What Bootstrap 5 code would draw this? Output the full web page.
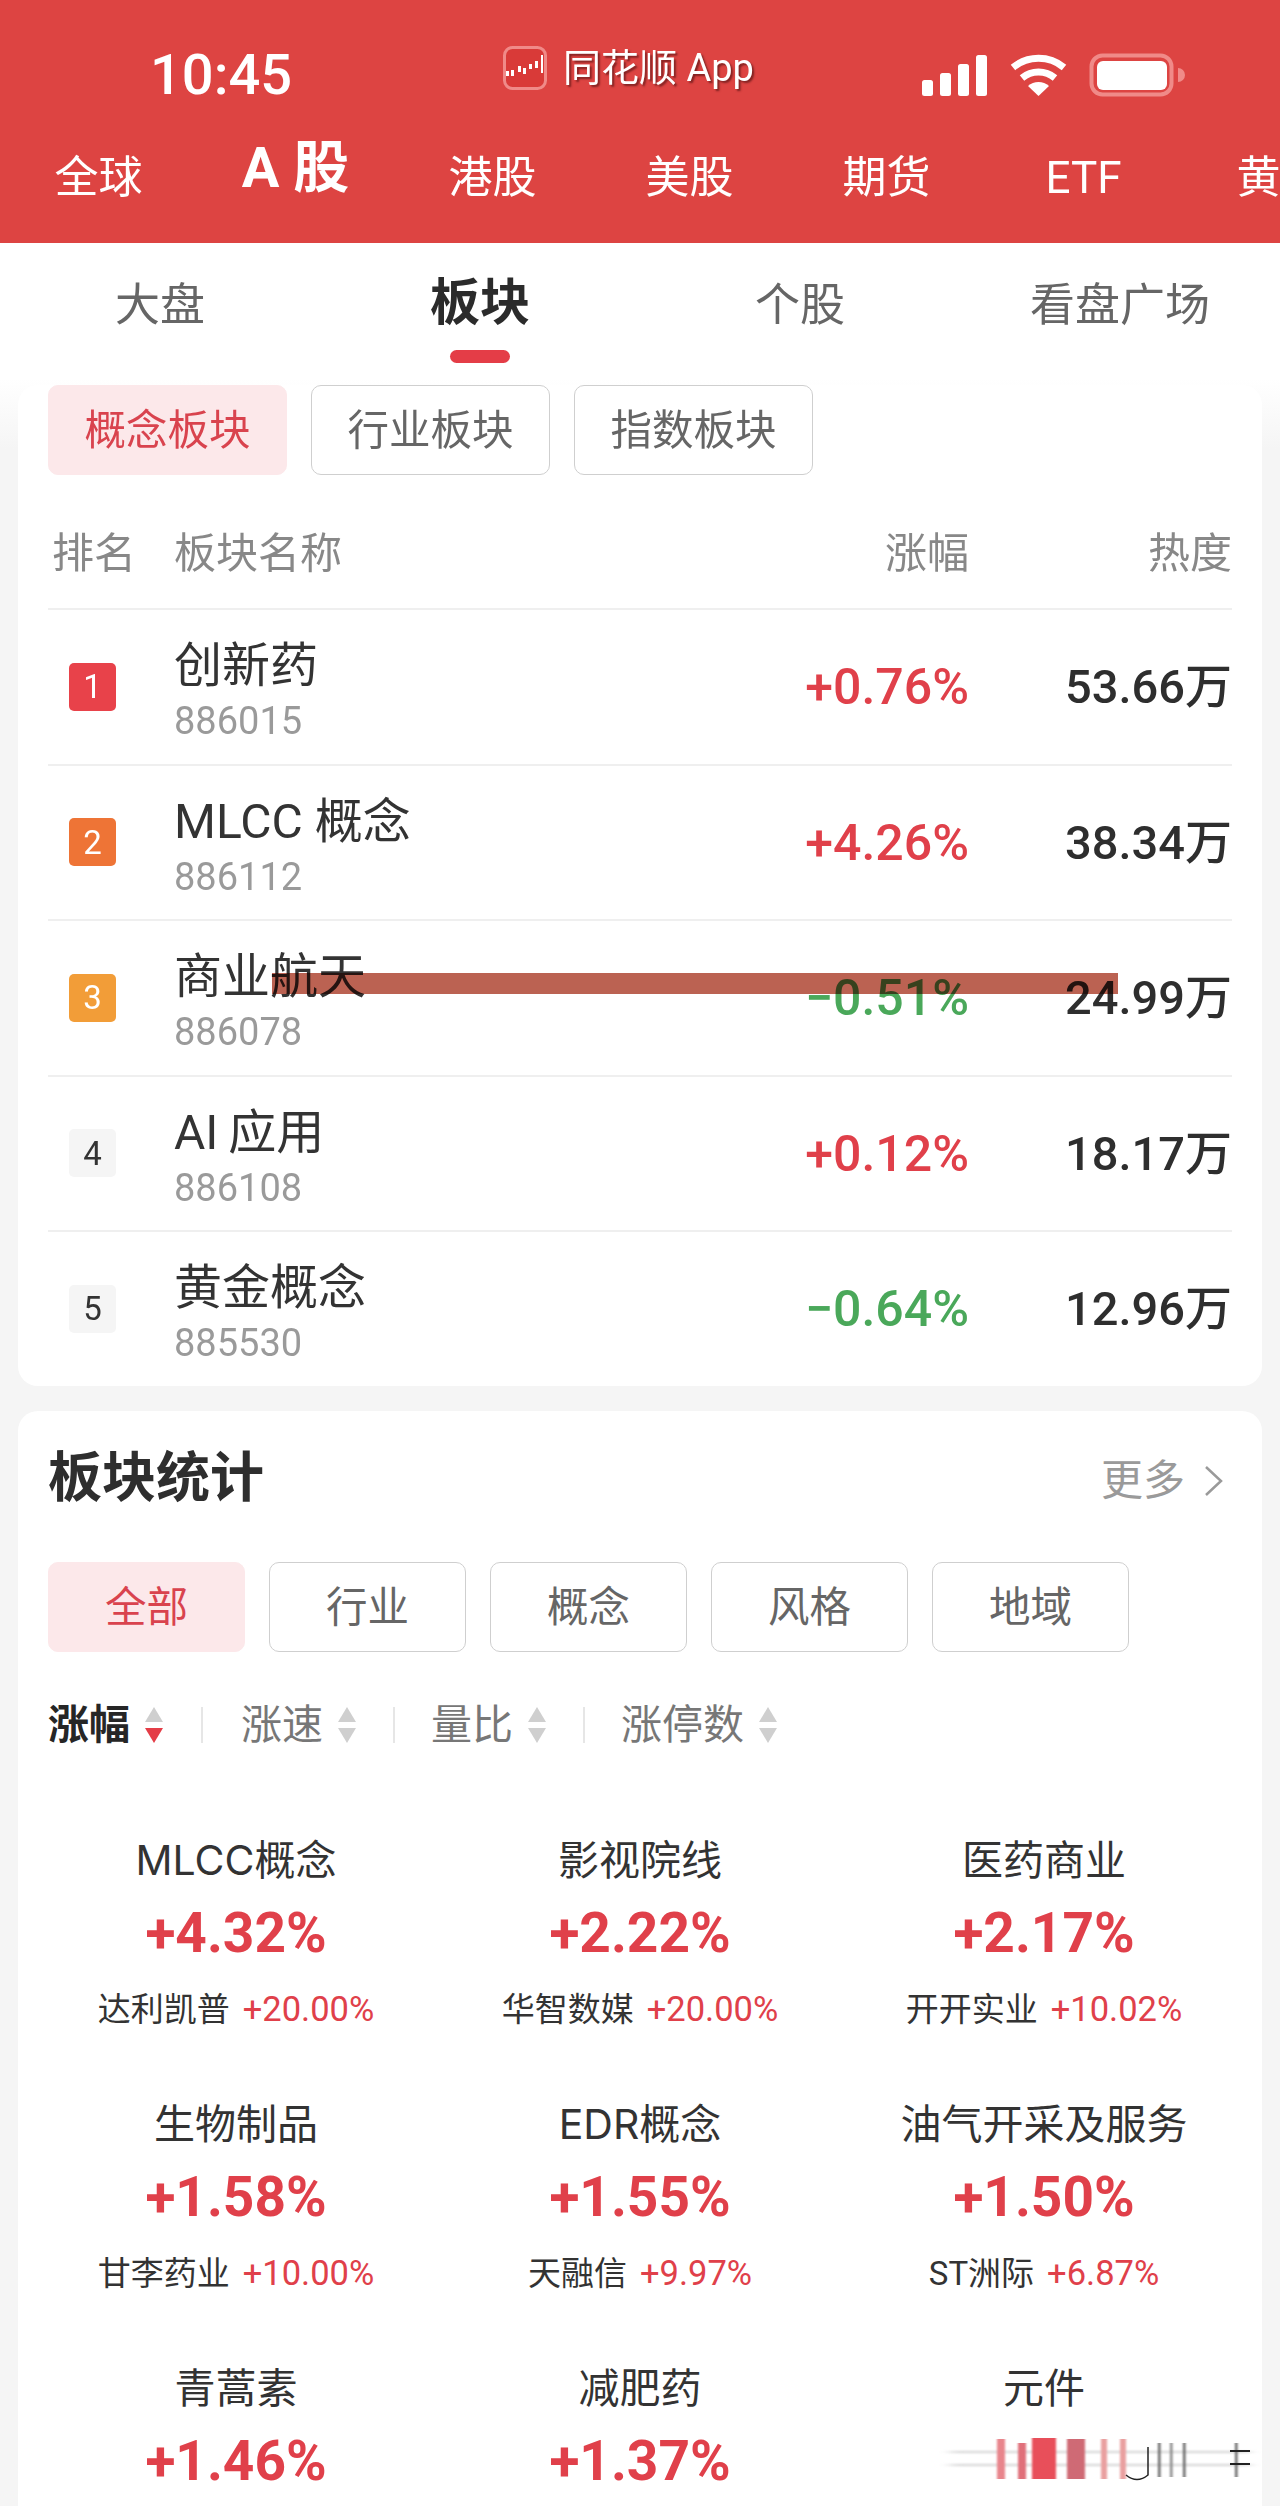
<!DOCTYPE html>
<html lang="zh-CN">
<head>
  <meta charset="UTF-8" />
  <meta name="viewport" content="width=device-width, initial-scale=1.0" />
  <title>板块</title>
  <link href="https://cdn.jsdelivr.net/npm/bootstrap@5.3.2/dist/css/bootstrap.min.css" rel="stylesheet">
  <style>
    html, body { margin: 0; }
    body {
      width: 1280px;
      height: 2506px;
      overflow: hidden;
      background: #f5f5f5;
      color: #2e2e2e;
      font-family: Roboto, "Noto Sans CJK SC", sans-serif;
    }
    .top-bar { background: #dd4442; height: 243px; color: #fff; overflow: hidden; }
    .status-row { height: 148px; padding-top: 45px; }
    .clock { width: 503px; padding-left: 150px; font-size: 56px; line-height: 60px; font-weight: 500; }
    .app-name { font-size: 38px; line-height: 46px; text-shadow: 2px 2px 2px rgba(90,20,20,.7); gap: 16px; }
    .status-icons { margin: 7px 80px 0 auto; }
    .market-tab { flex: 0 0 197px; text-align: center; font-size: 44px; line-height: 60px; }
    .market-tab.on { font-size: 56px; font-weight: 700; margin-top: -10px; }
    .sub-tabs { background: #fff; height: 136px; }
    .sub-tab { text-align: center; font-size: 45px; line-height: 60px; padding-top: 33px; color: #666; }
    .sub-tab.on { color: #2b2b2b; font-weight: 700; font-size: 50px; padding-top: 30px; }
    .sub-line { width: 60px; height: 13px; border-radius: 7px; background: #e43d47; margin: 17px auto 0; }
    .page-body { padding: 6px 18px 0; background: linear-gradient(#fff, #f5f5f5 70px); }
    .panel { border: 0; border-radius: 20px; padding: 0 30px; background: #fff; }
    .chip {
      height: 90px; border: 1.5px solid #cfcfcf; border-radius: 10px; background: #fff;
      color: #666; font-size: 41.5px; line-height: 1; padding: 2px 0 0;
      display: flex; align-items: center; justify-content: center;
    }
    .chip.on { background: #fce8ea; border-color: #fce8ea; color: #d9434e; }
    .chip-wide { width: 239px; }
    .chip-mid { width: 197px; }
    .chip-gap { gap: 24px; }
    .list-head { height: 60px; margin-top: 49px; margin-bottom: 24px; font-size: 42px; line-height: 60px; color: #888; }
    .col-rank { width: 126px; padding-left: 4px; }
    .col-pct { width: 200px; text-align: right; }
    .col-heat { width: 263px; text-align: right; }
    .list-group-flush > .list-group-item.rank-row {
      height: 155.5px; padding: 0; border-width: 2px 0 0; border-style: solid; border-color: #efefef;
      position: relative; background: transparent; border-radius: 0;
    }
    .rank-badge {
      width: 47px; height: 48px; margin-left: 21px; margin-right: 58px; border-radius: 5px;
      background: #f5f5f5; color: #333; font-size: 33px; flex: none;
      display: flex; align-items: center; justify-content: center;
    }
    .rank-1 { background: #e8424a; color: #fff; }
    .rank-2 { background: #ee7436; color: #fff; }
    .rank-3 { background: #f29d38; color: #fff; }
    .rank-name { font-size: 48px; line-height: 60px; padding-top: 26px; color: #333; }
    .rank-code { font-size: 38px; line-height: 50px; color: #9a9a9a; }
    .pct-val { font-size: 50px; font-weight: 500; line-height: 60px; padding-top: 1px; }
    .heat-val { font-size: 47px; font-weight: 500; line-height: 60px; padding-top: 1px; color: #2e2e2e; }
    .up { color: #e0404a; }
    .down { color: #4aa85a; }
    .strike {
      position: absolute; left: 224px; top: 52px; width: 846px; height: 21px;
      background: rgba(172,64,44,.82); mix-blend-mode: multiply; filter: blur(.7px);
    }
    .stats-panel { margin-top: 25px; border-radius: 20px 20px 0 0; height: 1200px; }
    .stats-head { padding-top: 33px; height: 104px; }
    .stats-title { font-size: 54px; line-height: 70px; font-weight: 700; }
    .stats-more { font-size: 42px; line-height: 70px; color: #9a9a9a; gap: 18px; margin-right: 7px; padding-top: 3px; }
    .chip-row { margin-top: 47px; height: 90px; }
    .sort-row { margin-top: 48px; height: 50px; font-size: 41px; line-height: 50px; color: #777; }
    .sort-item { gap: 13px; }
    .sort-item.on { color: #262626; font-weight: 700; }
    .sort-sep { width: 2px; height: 36px; background: #e6e6e6; margin: 0 38px 0 36px; }
    .sort-sep.wide { margin: 0 36px 0 35px; }
    .stat-grid { margin: 80px -14px 0; width: auto; }
    .stat-cell { height: 264px; text-align: center; padding: 0; }
    .stat-name { font-family: Inter, "Noto Sans CJK SC", sans-serif; font-size: 41px; line-height: 60px; color: #333; }
    .stat-pct { font-size: 55px; line-height: 86px; font-weight: 700; color: #e0404a; }
    .stat-sub { font-size: 33px; line-height: 66px; color: #333; }
    .stat-sub b { font-weight: 400; font-size: 34.5px; color: #e0404a; margin-left: 13px; }
    .smudge { display: block; height: 88px; width: 100%; overflow: visible; }
  </style>
</head>
<body>
  <div class="top-bar">
    <div class="status-row d-flex align-items-start">
      <div class="clock">10:45</div>
      <div class="app-name d-flex align-items-center">
        <svg width="44" height="44" viewBox="0 0 44 44">
          <rect x="1.5" y="1.5" width="41" height="41" rx="8" fill="#d93a38" stroke="#f08a88" stroke-width="3"/>
          <g fill="#fff">
            <rect x="3" y="25" width="3" height="5"/><rect x="8" y="24" width="3" height="6"/>
            <rect x="15" y="20" width="3" height="6"/><rect x="20" y="22" width="3" height="6"/>
            <rect x="26" y="18" width="3" height="5"/><rect x="32" y="15" width="3" height="7"/>
            <rect x="38" y="9" width="2" height="18"/>
          </g>
        </svg>
        <span>同花顺 App</span>
      </div>
      <svg class="status-icons" width="280" height="60" viewBox="0 0 280 60">
        <g fill="#fff">
          <rect x="2" y="28" width="11" height="16" rx="2.5"/><rect x="20" y="21" width="11" height="23" rx="2.5"/>
          <rect x="38" y="12" width="11" height="32" rx="2.5"/><rect x="56" y="3" width="11" height="41" rx="2.5"/>
        </g>
        <g fill="none" stroke="#fff" stroke-width="7">
          <path d="M93 15.5a40 40 0 0 1 51 0"/>
          <path d="M102 26a26 26 0 0 1 33 0"/>
        </g>
        <path d="M108 34a16 16 0 0 1 21 0l-10.5 10z" fill="#fff"/>
        <rect x="171.5" y="3.5" width="80" height="39" rx="11" fill="none" stroke="#f08a88" stroke-width="4"/>
        <rect x="177" y="9" width="70" height="29" rx="6" fill="#fff"/>
        <path d="M258 16a7 7 0 0 1 0 14z" fill="#f08a88"/>
      </svg>
    </div>
    <div class="d-flex">
      <div class="market-tab">全球</div>
      <div class="market-tab on">A 股</div>
      <div class="market-tab">港股</div>
      <div class="market-tab">美股</div>
      <div class="market-tab">期货</div>
      <div class="market-tab">ETF</div>
      <div class="market-tab">黄金</div>
    </div>
  </div>

  <div class="sub-tabs row g-0">
    <div class="col-3 sub-tab">大盘</div>
    <div class="col-3 sub-tab on">板块<div class="sub-line"></div></div>
    <div class="col-3 sub-tab">个股</div>
    <div class="col-3 sub-tab">看盘广场</div>
  </div>

  <div class="page-body">
    <div class="card panel">
      <div class="d-flex chip-gap">
        <button class="btn chip chip-wide on">概念板块</button>
        <button class="btn chip chip-wide">行业板块</button>
        <button class="btn chip chip-wide">指数板块</button>
      </div>
      <div class="list-head d-flex">
        <div class="col-rank">排名</div>
        <div class="flex-grow-1">板块名称</div>
        <div class="col-pct">涨幅</div>
        <div class="col-heat">热度</div>
      </div>
      <ul class="list-group list-group-flush">
        <li class="list-group-item rank-row d-flex align-items-center">
          <div class="rank-badge rank-1">1</div>
          <div class="flex-grow-1 align-self-start"><div class="rank-name">创新药</div><div class="rank-code">886015</div></div>
          <div class="col-pct pct-val up">+0.76%</div>
          <div class="col-heat heat-val">53.66万</div>
        </li>
        <li class="list-group-item rank-row d-flex align-items-center">
          <div class="rank-badge rank-2">2</div>
          <div class="flex-grow-1 align-self-start"><div class="rank-name">MLCC 概念</div><div class="rank-code">886112</div></div>
          <div class="col-pct pct-val up">+4.26%</div>
          <div class="col-heat heat-val">38.34万</div>
        </li>
        <li class="list-group-item rank-row d-flex align-items-center">
          <div class="rank-badge rank-3">3</div>
          <div class="flex-grow-1 align-self-start"><div class="rank-name">商业航天</div><div class="rank-code">886078</div></div>
          <div class="col-pct pct-val down">−0.51%</div>
          <div class="col-heat heat-val">24.99万</div>
          <div class="strike"></div>
        </li>
        <li class="list-group-item rank-row d-flex align-items-center">
          <div class="rank-badge">4</div>
          <div class="flex-grow-1 align-self-start"><div class="rank-name">AI&#8201;应用</div><div class="rank-code">886108</div></div>
          <div class="col-pct pct-val up">+0.12%</div>
          <div class="col-heat heat-val">18.17万</div>
        </li>
        <li class="list-group-item rank-row d-flex align-items-center">
          <div class="rank-badge">5</div>
          <div class="flex-grow-1 align-self-start"><div class="rank-name">黄金概念</div><div class="rank-code">885530</div></div>
          <div class="col-pct pct-val down">−0.64%</div>
          <div class="col-heat heat-val">12.96万</div>
        </li>
      </ul>
    </div>

    <div class="card panel stats-panel">
      <div class="stats-head d-flex justify-content-between">
        <div class="stats-title">板块统计</div>
        <div class="stats-more d-flex align-items-center">更多
          <svg width="22" height="34" viewBox="0 0 22 34"><path d="M3 3l15 14L3 31" fill="none" stroke="#9a9a9a" stroke-width="2.5"/></svg>
        </div>
      </div>
      <div class="chip-row d-flex chip-gap">
        <button class="btn chip chip-mid on">全部</button>
        <button class="btn chip chip-mid">行业</button>
        <button class="btn chip chip-mid">概念</button>
        <button class="btn chip chip-mid">风格</button>
        <button class="btn chip chip-mid">地域</button>
      </div>
      <div class="sort-row d-flex align-items-center">
        <div class="sort-item on d-flex align-items-center">涨幅
          <svg width="22" height="38" viewBox="0 0 22 38"><path d="M11 1l9 15H2z" fill="#cfcfcf"/><path d="M2 22h18l-9 15z" fill="#e43d47"/></svg>
        </div>
        <div class="sort-sep"></div>
        <div class="sort-item d-flex align-items-center">涨速
          <svg width="22" height="38" viewBox="0 0 22 38"><path d="M11 1l9 15H2z" fill="#cfcfcf"/><path d="M2 22h18l-9 15z" fill="#cfcfcf"/></svg>
        </div>
        <div class="sort-sep wide"></div>
        <div class="sort-item d-flex align-items-center">量比
          <svg width="22" height="38" viewBox="0 0 22 38"><path d="M11 1l9 15H2z" fill="#cfcfcf"/><path d="M2 22h18l-9 15z" fill="#cfcfcf"/></svg>
        </div>
        <div class="sort-sep wide"></div>
        <div class="sort-item d-flex align-items-center">涨停数
          <svg width="22" height="38" viewBox="0 0 22 38"><path d="M11 1l9 15H2z" fill="#cfcfcf"/><path d="M2 22h18l-9 15z" fill="#cfcfcf"/></svg>
        </div>
      </div>
      <div class="stat-grid row g-0">
        <div class="col-4 stat-cell">
          <div class="stat-name">MLCC概念</div><div class="stat-pct">+4.32%</div>
          <div class="stat-sub">达利凯普<b>+20.00%</b></div>
        </div>
        <div class="col-4 stat-cell">
          <div class="stat-name">影视院线</div><div class="stat-pct">+2.22%</div>
          <div class="stat-sub">华智数媒<b>+20.00%</b></div>
        </div>
        <div class="col-4 stat-cell">
          <div class="stat-name">医药商业</div><div class="stat-pct">+2.17%</div>
          <div class="stat-sub">开开实业<b>+10.02%</b></div>
        </div>
        <div class="col-4 stat-cell">
          <div class="stat-name">生物制品</div><div class="stat-pct">+1.58%</div>
          <div class="stat-sub">甘李药业<b>+10.00%</b></div>
        </div>
        <div class="col-4 stat-cell">
          <div class="stat-name">EDR概念</div><div class="stat-pct">+1.55%</div>
          <div class="stat-sub">天融信<b>+9.97%</b></div>
        </div>
        <div class="col-4 stat-cell">
          <div class="stat-name">油气开采及服务</div><div class="stat-pct">+1.50%</div>
          <div class="stat-sub">ST洲际<b>+6.87%</b></div>
        </div>
        <div class="col-4 stat-cell">
          <div class="stat-name">青蒿素</div><div class="stat-pct">+1.46%</div>
        </div>
        <div class="col-4 stat-cell">
          <div class="stat-name">减肥药</div><div class="stat-pct">+1.37%</div>
        </div>
        <div class="col-4 stat-cell">
          <div class="stat-name">元件</div>
          <svg class="smudge" viewBox="2 -11 404 88">
            <defs>
              <filter id="sm" x="-30%" y="-10%" width="160%" height="120%"><feGaussianBlur stdDeviation="1.2 .4"/></filter>
              <filter id="sl" x="-5%" y="-200%" width="110%" height="500%"><feGaussianBlur stdDeviation="6 1.2"/></filter>
            </defs>
            <g fill="#888" opacity=".35" filter="url(#sl)">
              <rect x="110" y="22" width="300" height="2"/><rect x="110" y="35" width="300" height="2"/>
            </g>
            <g filter="url(#sm)">
              <rect x="157" y="10" width="8" height="40" fill="#e8858c"/>
              <rect x="178" y="14" width="8" height="36" fill="#e0707a"/>
              <rect x="192" y="9" width="24" height="41" fill="#e8505a"/>
              <rect x="227" y="10" width="18" height="40" fill="#cf6a74"/>
              <rect x="261" y="10" width="6" height="40" fill="#e9a0a0"/>
              <rect x="280" y="10" width="6" height="40" fill="#e9a0a0"/>
              <rect x="318" y="14" width="2.5" height="34" fill="#666"/>
              <rect x="330" y="14" width="2.5" height="34" fill="#888"/>
              <rect x="343" y="14" width="2.5" height="34" fill="#666"/>
              <rect x="395" y="14" width="2.5" height="34" fill="#666"/>
            </g>
            <path d="M286 46q11 9 22 0V18" fill="none" stroke="#222" stroke-width="1.5"/>
            <path d="M390 22h20M390 35h20" stroke="#222" stroke-width="2"/>
          </svg>
        </div>
      </div>
    </div>
  </div>
</body>
</html>
